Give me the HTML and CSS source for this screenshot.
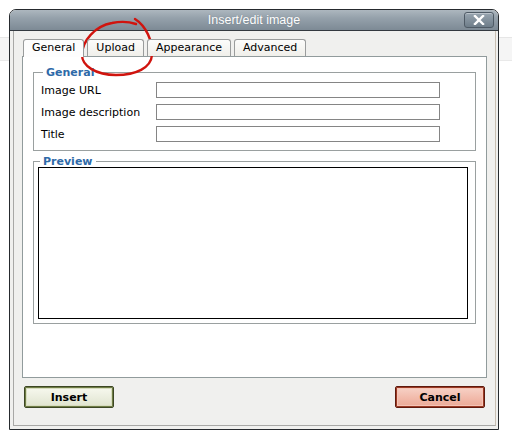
FILE: index.html
```html
<!DOCTYPE html>
<html>
<head>
<meta charset="utf-8">
<link rel="stylesheet" href="styles.css">
</head>
<body>
<div class="dialog">
  <div class="titlebar">
    <span></span>
    <span class="title">Insert/edit image</span>
    <button class="close" type="button" aria-label="Close">
      <svg width="12" height="10" viewBox="0 0 12 10"><path d="M2 1 L10 9 M10 1 L2 9" stroke="#fff" stroke-width="2.4" stroke-linecap="square"/></svg>
    </button>
  </div>
  <div class="frame">
    <div class="frame-inner">
      <div class="tabs">
        <span class="tab active">General</span>
        <span class="tab">Upload</span>
        <span class="tab">Appearance</span>
        <span class="tab">Advanced</span>
      </div>
      <div class="panel">
        <fieldset class="group">
          <legend>General</legend>
          <div class="form">
            <label>Image URL</label><input type="text">
            <label>Image description</label><input type="text">
            <label>Title</label><input type="text">
          </div>
        </fieldset>
        <fieldset class="group preview-group">
          <legend>Preview</legend>
          <div class="preview"></div>
        </fieldset>
      </div>
      <div class="actions">
        <button class="btn insert" type="button">Insert</button>
        <button class="btn cancel" type="button">Cancel</button>
      </div>
    </div>
  </div>
</div>
<svg class="scribble" width="512" height="441" viewBox="0 0 512 441">
  <path d="M135 19 C146 26 153 41 152 55 C151 68 136 75 116 75 C96 75 82 66 82 55 C82 41 95 26 112 23 C122 21 130 22 136 24" fill="none" stroke="#d0140e" stroke-width="2.4" stroke-linecap="round"/>
</svg>
</body>
</html>
```
FILE: styles.css
```css
html, body {
  margin: 0;
  padding: 0;
}
body {
  width: 512px;
  height: 441px;
  position: relative;
  overflow: hidden;
  font-family: "DejaVu Sans", Verdana, sans-serif;
  font-size: 11px;
  color: #000;
  background: linear-gradient(to bottom, #fff 0, #fff 37px, #e6e6e6 37px, #e6e6e6 38px, #f5f5f5 38px, #f5f5f5 60px, #e9e9e9 60px, #e9e9e9 61px, #fff 61px);
}
.dialog {
  box-sizing: border-box;
  margin: 9px 0 0 9px;
  width: 490px;
  height: 421px;
  border: 1px solid #262a2e;
  border-radius: 7px 7px 0 0;
  overflow: hidden;
  background: #f0f0ee;
  display: flex;
  flex-direction: column;
}
.titlebar {
  height: 20px;
  border-bottom: 1px solid #33393f;
  background: linear-gradient(to bottom, #adb7bf 0, #95a1ab 40%, #7d8a95 100%);
  display: grid;
  grid-template-columns: 1fr auto 1fr;
  align-items: center;
}
.title {
  font-family: "Liberation Sans", Tahoma, sans-serif;
  font-size: 12.5px;
  color: #fff;
  text-shadow: 0 0 1px rgba(60,70,80,0.4);
}
.close {
  justify-self: end;
  margin-right: 4px;
  width: 30px;
  height: 16px;
  padding: 0;
  border: 1px solid #4f5b66;
  border-radius: 3px;
  background: linear-gradient(to bottom, #98a5b0, #6e7d89);
  box-shadow: inset 0 1px 0 rgba(255,255,255,0.35);
  display: flex;
  align-items: center;
  justify-content: center;
}
.frame {
  flex: 1;
  padding: 0 2px 3px 3px;
  display: flex;
}
.frame-inner {
  flex: 1;
  border-left: 1px solid #a8a8a6;
  border-bottom: 1px solid #a8a8a6;
  border-right: 1px solid #c8bfb2;
  display: flex;
  flex-direction: column;
}
.tabs {
  display: flex;
  gap: 3px;
  padding: 8px 0 0 9px;
  height: 17px;
  position: relative;
  z-index: 1;
}
.tab {
  box-sizing: border-box;
  height: 17px;
  padding: 0 8px;
  line-height: 16px;
  border: 1px solid #9a9c9c;
  border-bottom: none;
  border-radius: 3px 3px 0 0;
  background: linear-gradient(to bottom, #fcfcfb, #f0efea);
  color: #000;
}
.tab.active {
  height: 18px;
  background: #fdfdfd;
}
.panel {
  margin: 0 8px;
  height: 322px;
  box-sizing: border-box;
  border: 1px solid #919b9c;
  background: #fff;
  display: flex;
  flex-direction: column;
}
.group {
  margin: 10px 10px 0;
  padding: 4px 7px 8px;
  border: 1px solid #9aa0a0;
}
.group legend {
  margin-left: 2px;
  padding: 0 3px;
  line-height: 11px;
  font-weight: bold;
  color: #2e6aa8;
}
.form {
  display: grid;
  grid-template-columns: 115px 284px;
  row-gap: 6px;
  align-items: center;
}
.form input {
  box-sizing: border-box;
  height: 16px;
  width: 284px;
  margin: 0;
  padding: 0;
  border: 1px solid #858585;
  background: #fff;
}
.preview-group {
  margin-top: 5px;
  padding: 0 4px 4px;
}
.preview {
  box-sizing: border-box;
  width: 430px;
  height: 152px;
  border: 1px solid #000;
  background: #fff;
}
.actions {
  display: flex;
  justify-content: space-between;
  padding: 8px 10px 0;
}
.btn {
  box-sizing: border-box;
  width: 90px;
  height: 22px;
  padding: 0;
  font-family: "DejaVu Sans", Verdana, sans-serif;
  font-size: 11px;
  font-weight: bold;
  color: #000;
  border-radius: 2px;
}
.insert {
  border: 1px solid #3c4624;
  background: linear-gradient(to bottom, #f8f9ef, #e9ecdc 60%, #dfe3cc);
  box-shadow: inset 0 0 0 1px #6f7d45, inset 0 0 0 2px #d7dcc0;
}
.cancel {
  border: 1px solid #5e1a0e;
  background: linear-gradient(to bottom, #f7d3c8, #f1b8a8 60%, #eba995);
  box-shadow: inset 0 0 0 1px #9c3a24, inset 0 0 0 2px #f5c4b6;
}
.scribble {
  position: absolute;
  left: 0;
  top: 0;
  pointer-events: none;
}
```
